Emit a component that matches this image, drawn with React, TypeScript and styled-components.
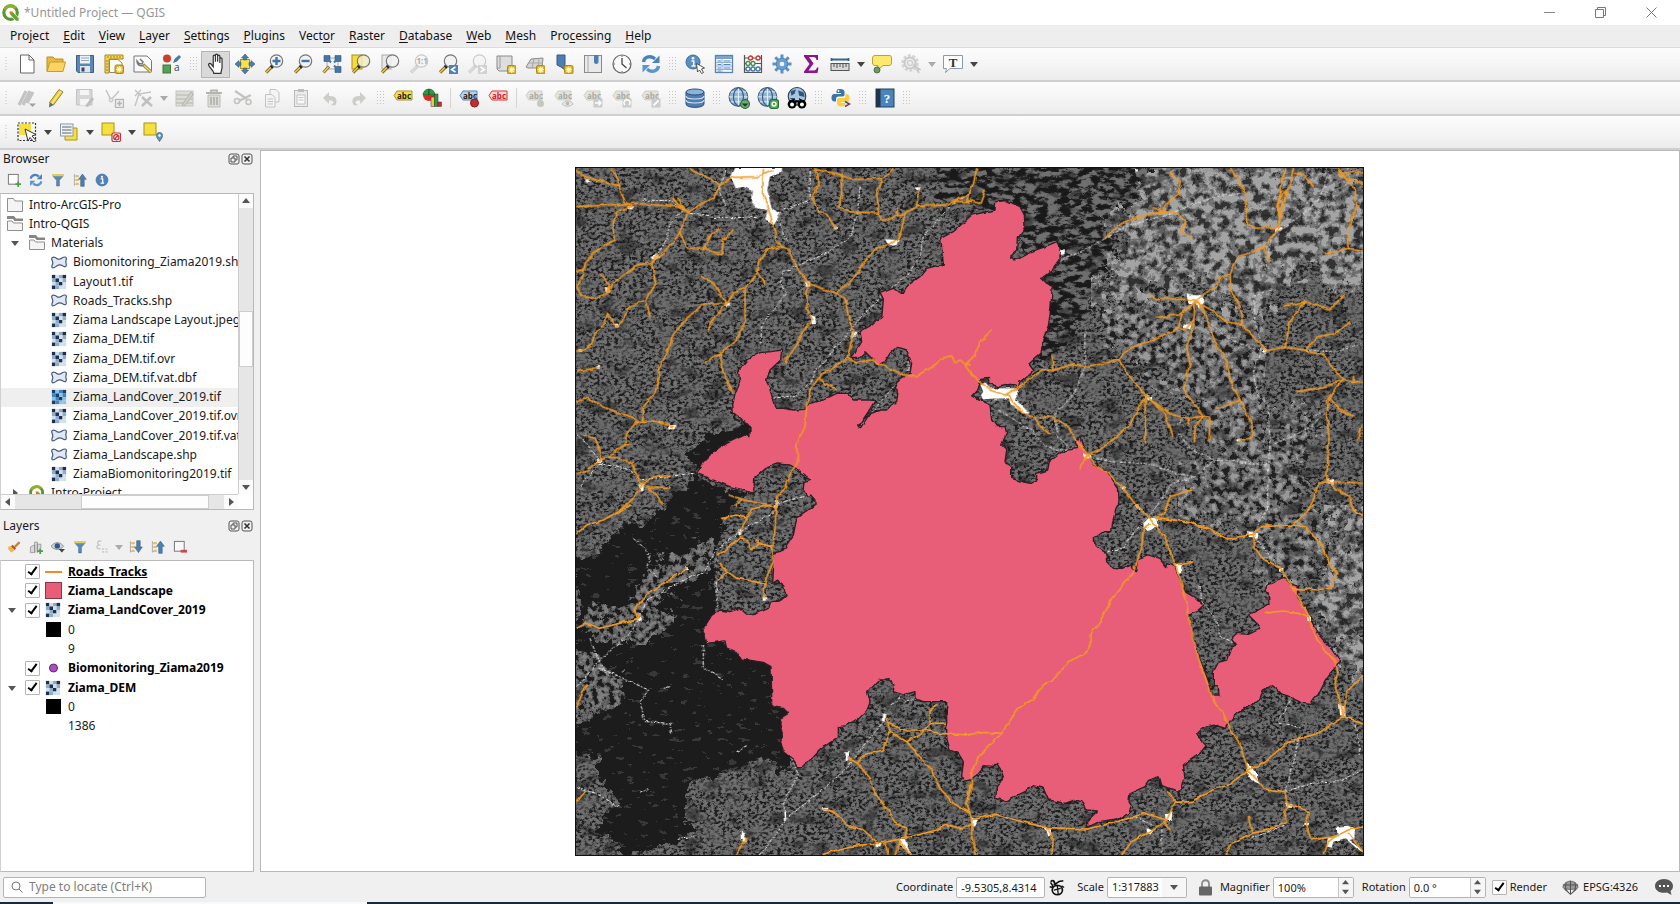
import React from "react";
import styled, { createGlobalStyle, css } from "styled-components";

const GlobalStyle = createGlobalStyle`
  *, *::before, *::after { box-sizing: border-box; }
  html, body, #root { height: 100%; }
  body {
    margin: 0;
    background: #f0f0f0;
    color: #1a1a1a;
    font-family: "Noto Sans", "Open Sans", sans-serif;
    font-size: 12px;
    line-height: 18px;
  }
  button, input, select { font: inherit; color: inherit; margin: 0; }
`;

/* ---------- Window chrome ---------- */

const Window = styled.div`
  display: flex;
  flex-direction: column;
  height: 100vh;
  min-height: 640px;
  overflow: hidden;
`;

const TitleBar = styled.header`
  display: flex;
  align-items: center;
  flex: none;
  height: 25px;
  padding-left: 2px;
  background: #fff;
`;

const Title = styled.h1`
  flex: 1;
  margin: 0 0 0 4px;
  font-size: 12px;
  font-weight: 400;
  color: #979797;
`;

const WindowButton = styled.button`
  display: flex;
  align-items: center;
  justify-content: center;
  width: 51px;
  height: 25px;
  padding: 0;
  border: 0;
  background: none;
`;

const WindowButtons = styled.div`
  display: flex;
  padding-right: 3px;
`;

const MenuBar = styled.nav`
  display: flex;
  align-items: center;
  flex: none;
  height: 23px;
  padding-left: 3px;
  background: #eee;
  border-bottom: 1px solid #dcdcdc;
`;

const MenuItem = styled.button`
  padding: 0 7px;
  border: 0;
  background: none;
  color: #111;
  u { text-underline-offset: 2px; }
`;

/* ---------- Toolbars ---------- */

const ToolRow = styled.div`
  display: flex;
  align-items: center;
  flex: none;
  height: 34px;
  background: linear-gradient(#fdfdfd, #ececec);
  border-bottom: 2px solid #cfcfcf;
`;

const Grip = styled.span<{ $first?: boolean }>`
  flex: none;
  width: ${(p) => (p.$first ? 12 : 15)}px;
  height: 16px;
  padding: 0 4px;
  background: radial-gradient(circle, #c4c4c4 34%, transparent 36%) 50% 0 / 3px 3px content-box;
`;

const Rule = styled.span`
  flex: none;
  width: 8px;
  height: 20px;
  background: linear-gradient(#d4d4d4, #d4d4d4) 50% 0 / 1px 100% no-repeat;
`;

const ToolButton = styled.button<{ $active?: boolean }>`
  display: flex;
  align-items: center;
  justify-content: center;
  flex: none;
  width: 29px;
  height: 27px;
  padding: 0;
  border: 1px solid transparent;
  background: none;
  ${(p) =>
    p.$active &&
    css`
      background: #d9d9d9;
      border-color: #b5b5b5;
    `}
`;

const ArrowButton = styled.button`
  display: flex;
  align-items: center;
  justify-content: center;
  flex: none;
  width: 13px;
  height: 27px;
  padding: 0;
  border: 0;
  background: none;
`;

/* ---------- Docks ---------- */

const Body = styled.main`
  display: flex;
  flex: 1;
  min-height: 0;
`;

const Docks = styled.aside`
  display: flex;
  flex-direction: column;
  flex: none;
  width: 254px;
`;

const Dock = styled.section<{ $grow?: boolean }>`
  display: flex;
  flex-direction: column;
  ${(p) => (p.$grow ? "flex: 1; min-height: 0;" : "flex: none; height: 360px;")}
`;

const DockHead = styled.header`
  display: flex;
  align-items: center;
  flex: none;
  gap: 1px;
  height: 18px;
  padding: 0 1px 0 3px;
`;

const DockTitle = styled.h2`
  flex: 1;
  margin: 0;
  font-size: 12px;
  font-weight: 400;
`;

const DockButton = styled.button`
  display: flex;
  padding: 0;
  border: 0;
  background: none;
`;

const DockTools = styled.div`
  display: flex;
  align-items: center;
  flex: none;
  height: 25px;
  padding: 0 0 2px 3px;
`;

const SmallTool = styled.button<{ $narrow?: boolean }>`
  display: flex;
  align-items: center;
  justify-content: center;
  width: ${(p) => (p.$narrow ? 12 : 22)}px;
  height: 22px;
  padding: 0;
  border: 0;
  background: none;
`;

const Splitter = styled.div`
  flex: none;
  height: 7px;
`;

const ListBox = styled.div`
  display: grid;
  grid-template: 1fr 15px / 1fr 15px;
  flex: 1;
  min-height: 0;
  background: #fff;
  border: 1px solid #b9b9b9;
  border-left-color: #d0d0d0;
`;

const TreeView = styled.div`
  overflow: hidden;
  padding-top: 1px;
`;

const Tree = styled.ul`
  display: grid;
  grid-auto-rows: 1fr;
  height: 308px;
  margin: 0;
  padding: 0;
  list-style: none;
`;

const TreeRow = styled.li<{ $depth: number; $hover?: boolean }>`
  display: flex;
  align-items: center;
  gap: 6px;
  padding-left: ${(p) => (p.$depth === 1 ? 6 : 6 + p.$depth * 22)}px;
  white-space: nowrap;
  background: ${(p) => (p.$hover ? "#efefef" : "none")};
  svg { flex: none; }
`;

const Twisty = styled.span`
  display: flex;
  align-items: center;
  justify-content: center;
  flex: none;
  width: 16px;
`;

const Scroll = styled.div<{ $dir: "row" | "column" }>`
  display: flex;
  flex-direction: ${(p) => p.$dir};
  background: #e6e6e6;
  border: 0 solid #cdcdcd;
  ${(p) => (p.$dir === "row" ? "border-top-width: 1px;" : "border-left-width: 1px;")}
`;

const ScrollButton = styled.button`
  display: flex;
  align-items: center;
  justify-content: center;
  flex: none;
  width: 14px;
  height: 14px;
  padding: 0;
  border: 0;
  background: #fbfbfb;
`;

const Track = styled.div<{ $size: number }>`
  flex: ${(p) => p.$size} 1 0;
`;

const Thumb = styled.div<{ $size: number }>`
  flex: ${(p) => p.$size} 1 0;
  background: #fdfdfd;
  border: 1px solid #cdcdcd;
`;

const LayerBox = styled.div`
  flex: 1;
  min-height: 0;
  padding-top: 1px;
  background: #fff;
  border: 1px solid #b9b9b9;
  border-left-color: #d0d0d0;
`;

const LayerList = styled.ul`
  display: grid;
  grid-auto-rows: 1fr;
  height: 174px;
  margin: 0;
  padding: 0;
  list-style: none;
`;

const LayerRow = styled.li`
  display: grid;
  grid-template-columns: 24px 20px 17px 1fr;
  align-items: center;
  label, > span:last-child { padding-left: 6px; }
`;

const LayerTwisty = styled(Twisty)`
  width: 21px;
`;

const LayerName = styled.label<{ $current?: boolean }>`
  font-weight: 700;
  color: #000;
  text-decoration: ${(p) => (p.$current ? "underline" : "none")};
`;

const Check = styled.input.attrs({ type: "checkbox" })`
  appearance: none;
  display: flex;
  justify-content: center;
  flex: none;
  width: 15px;
  height: 15px;
  border: 1px solid #b4b4b4;
  border-radius: 1px;
  background: #fff;
  &:checked::after {
    content: "";
    width: 5px;
    height: 10px;
    border: solid #000;
    border-width: 0 2px 2px 0;
    transform: rotate(36deg);
  }
`;

const VSplit = styled.div`
  flex: none;
  width: 6px;
`;

const Canvas = styled.section`
  display: flex;
  align-items: center;
  justify-content: center;
  flex: 1;
  min-width: 0;
  padding-right: 2px;
  overflow: hidden;
  background: #fff;
  border: 1px solid #b9b9b9;
`;

const MapSvg = styled.svg`
  flex: none;
`;

/* ---------- Status bar ---------- */

const StatusBar = styled.footer`
  display: flex;
  align-items: center;
  flex: none;
  height: 30px;
  padding: 0 7px 0 3px;
  font-size: 11px;
  white-space: nowrap;
`;

const Locator = styled.label`
  display: flex;
  align-items: center;
  gap: 6px;
  width: 203px;
  height: 21px;
  margin-right: auto;
  padding-left: 7px;
  font-size: 12px;
  background: #fff;
  border: 1px solid #b4b4b4;
  border-radius: 2px;
  input {
    flex: 1;
    min-width: 0;
    padding: 0;
    border: 0;
    outline: 0;
    background: none;
  }
  input::placeholder { color: #7d7d7d; opacity: 1; }
`;

const Field = styled.div<{ $gap: number }>`
  display: flex;
  align-items: center;
  gap: 3px;
  margin-left: ${(p) => p.$gap}px;
`;

const Box = styled.span<{ $width: number }>`
  display: grid;
  grid-template-columns: 1fr auto;
  align-items: center;
  width: ${(p) => p.$width}px;
  height: 21px;
  background: #fff;
  border: 1px solid #b4b4b4;
  border-radius: 2px;
  input, select {
    grid-area: 1 / 1 / 2 / 2;
    width: 100%;
    height: 19px;
    padding: 0 0 0 4px;
    border: 0;
    outline: 0;
    background: none;
    appearance: none;
  }
  select { grid-area: 1 / 1 / 2 / 3; }
`;

const DropMark = styled.span`
  display: flex;
  align-items: center;
  justify-content: center;
  grid-area: 1 / 2 / 2 / 3;
  width: 24px;
  height: 19px;
  background: #f6f6f6;
  pointer-events: none;
`;

const Steps = styled.span`
  display: grid;
  grid-template-rows: 1fr 1fr;
  width: 15px;
  height: 19px;
  border-left: 1px solid #c4c4c4;
  background: #f6f6f6;
  button {
    display: flex;
    align-items: center;
    justify-content: center;
    padding: 0;
    border: 0;
    background: none;
  }
`;

const StatusButton = styled.button`
  display: flex;
  align-items: center;
  gap: 4px;
  padding: 0;
  border: 0;
  background: none;
`;

const Taskbar = styled.div`
  display: flex;
  flex: none;
  height: 2px;
  background: #172a3a;
  span { width: 53px; }
  i { width: 314px; background: #f7f9fb; }
`;

/* ---------- Shared glyphs ---------- */

type Dir = "up" | "down" | "left" | "right";
const triangles: Record<Dir, string> = {
  up: "M0 6L4 1L8 6Z",
  down: "M0 2H8L4 7Z",
  left: "M6 0V8L1 4Z",
  right: "M2 0V8L7 4Z",
};

const Triangle = ({ dir, color = "#555", size = 8 }: { dir: Dir; color?: string; size?: number }) => (
  <svg width={size} height={size} viewBox="0 0 8 8" aria-hidden="true">
    <path d={triangles[dir]} fill={color} />
  </svg>
);

const Pic = ({ size = 20, children }: { size?: number; children: React.ReactNode }) => (
  <svg width={size} height={size} viewBox="0 0 20 20" fill="none" aria-hidden="true">
    {children}
  </svg>
);

const QLogo = ({ size = 18 }: { size?: number }) => (
  <Pic size={size}>
    <circle cx="9.500" cy="9.500" r="7.500" stroke="#589632" strokeWidth="3.500" />
    <path d="M3 6A7.500 7.500 0 0 1 15 4.500" stroke="#93b023" strokeWidth="3.500" />
    <path d="M9 8.500L12 8.500L19 16V19H15.500L9 12Z" fill="#6aa13b" stroke="#fff" strokeWidth=".8" />
    <path d="M8 8L12.500 8.500L9 12Z" fill="#ee7913" />
  </Pic>
);

const Sparkle = ({ x = 11, y = 11 }: { x?: number; y?: number }) => (
  <g transform={`translate(${x} ${y})`}>
    <rect x=".5" y=".5" width="8.500" height="8.500" rx="1.500" fill="#d9b01f" stroke="#b08a10" />
    <path d="M4.750 1.500V8M1.500 4.750H8M2.500 2.500L7 7M7 2.500L2.500 7" stroke="#fff7cf" strokeWidth="1.100" />
  </g>
);

const Lens = ({ dim, fill }: { dim?: boolean; fill?: string }) => (
  <g opacity={dim ? 0.35 : 1}>
    <path d="M8.500 12L2 18.500" stroke={dim ? "#999" : "#8c7322"} strokeWidth="3.200" />
    <path d="M7.500 12.800L2 18.300" stroke={dim ? "#bbb" : "#f0d466"} strokeWidth="1.200" />
    <path d="M9 11.500L7 13.500" stroke={dim ? "#999" : "#222"} strokeWidth="3.200" />
    <circle cx="12.500" cy="7" r="6.200" fill={fill ?? "#f1f1ee"} fillOpacity=".85" stroke="#777" strokeWidth="1.200" />
  </g>
);

const Tag = ({ fill, stroke, text = "#222", w = 19 }: { fill: string; stroke: string; text?: string; w?: number }) => (
  <g>
    <path d={`M1 7.500L4 3H${w}V12H4Z`} fill={fill} stroke={stroke} strokeLinejoin="round" />
    <text x="4" y="10.500" fontSize="8" fontWeight="700" fontFamily="Open Sans, sans-serif" fill={text}>
      abc
    </text>
  </g>
);

const Globe = () => (
  <>
    <circle cx="9.500" cy="9" r="8.500" fill="#8fb4d6" stroke="#44607c" />
    <path d="M9.500 .5V17.500M1 9H18M2.500 4.500H16.500M2.500 13.500H16.500" stroke="#e9f1f8" strokeWidth=".9" />
    <path d="M9.500 .5C3.500 4 3.500 14 9.500 17.500C15.500 14 15.500 4 9.500 .5Z" stroke="#3b5d80" strokeWidth="1.100" />
  </>
);

const rasterCells = "0210102121020122";

const Raster = ({ blue }: { blue?: boolean }) => {
  const shade = blue ? ["#163f6b", "#3d86c2", "#8fc0e6"] : ["#1d2f4c", "#8fabc8", "#cfdfed"];
  return (
    <svg width="16" height="16" viewBox="-1 -1 18 18" aria-hidden="true">
      {rasterCells.split("").map((c, i) => (
        <rect key={i} x={(i % 4) * 4} y={Math.floor(i / 4) * 4} width="4" height="4" fill={shade[Number(c)]} />
      ))}
    </svg>
  );
};

const Polygon = () => (
  <svg width="16" height="13" viewBox="0 0 16 13" fill="none" aria-hidden="true">
    <path d="M1 4C0 1.500 2 .8 4 1.500C6 2.200 6.500 3.800 9 3C11 2.300 12 .8 14 1C15.800 1.300 15.500 3 15 4.500C14.500 6 15.200 7.500 15.300 9C15.300 11 13.500 11 12 10C10 8.800 8 8.500 6 9.800C4.500 10.800 3 12.200 1.500 11.800C.2 11.200 1 9.500 1.600 8C2.200 6.500 1.600 5.500 1 4Z" fill="#dfe8f4" stroke="#42587a" strokeWidth="1.200" />
  </svg>
);

const Folder = ({ open }: { open?: boolean }) => (
  <svg width="16" height="16" viewBox="0 0 16 16" fill="none" aria-hidden="true">
    {open ? (
      <>
        <path d="M0 0H7L9 2.500H16V5H7.500L6 3H0Z" fill="#858585" />
        <path d="M.5 14.500V5H5L6.500 7H15.500V14.500Z" fill="#f4f4f4" stroke="#8f8f8f" />
      </>
    ) : (
      <path d="M.5 14.500V1.500H6.500L8 4H15.500V14.500Z" fill="#f4f4f4" stroke="#8f8f8f" />
    )}
  </svg>
);

const RefreshShape = () => (
  <>
    <path d="M2.500 8C3 3.500 8 1.500 12 3.500L14 5" stroke="#4a82bd" strokeWidth="3.400" />
    <path d="M18.500 1.500V9H11Z" fill="#4a82bd" />
    <path d="M17.500 12C17 16.500 12 18.500 8 16.500L6 15" stroke="#5b93cc" strokeWidth="3.400" />
    <path d="M1.500 18.500V11H9Z" fill="#5b93cc" />
  </>
);

const Funnel = () => (
  <>
    <path d="M2 3.500H18L12 10.500V18.500H8V10.500Z" fill="#5c8ab8" stroke="#3e6690" strokeWidth=".8" />
    <rect x="1.500" y="1.500" width="17" height="3" rx="1" fill="#d9cf62" />
  </>
);

const Info = () => (
  <>
    <circle cx="10" cy="10" r="8.500" fill="#4f83ba" stroke="#3c6899" />
    <circle cx="10" cy="5.500" r="1.500" fill="#fff" />
    <path d="M8 8.500H11V14.500M8 14.500H13" stroke="#fff" strokeWidth="1.800" />
  </>
);

const TreeArrow = ({ down }: { down?: boolean }) => (
  <>
    <path d="M2 1.500V18M2 4.500H8M2 10H8M2 16H8" stroke="#9a9a9a" />
    <path d="M4 3H8V6H4ZM4 8.500H8V11.500H4ZM4 14H8V17H4Z" fill="#e9bf5a" />
    <path d={down ? "M11 1H16V10H19L13.500 18L8 10H11Z" : "M11 19H16V9H19L13.500 1.500L8 9H11Z"} fill="#4d7fb3" stroke="#33597f" strokeWidth=".8" />
  </>
);

const grey = "#c3c3c0";

const DimTag = ({ children }: { children?: React.ReactNode }) => (
  <Pic>
    <Tag fill="#e4e4dd" stroke="#cfcfc8" text="#a9a9a4" w={17} />
    {children}
  </Pic>
);

const icons: Record<string, React.ReactNode> = {
  "New Project": (
    <Pic>
      <path d="M3.500 1H12L17 6V19H3.500Z" fill="#fff" stroke="#666" />
      <path d="M12 1V6H17" stroke="#666" />
    </Pic>
  ),
  "Open Project": (
    <Pic>
      <path d="M1 17V3H7L9 5H17V8" fill="#e8b93c" stroke="#b98d24" />
      <path d="M1 17.500L4 8H19.500L17 17.500Z" fill="#fbd460" stroke="#c99a2c" />
    </Pic>
  ),
  "Save Project": (
    <Pic>
      <path d="M1.500 1.500H18.500V18.500H3L1.500 17Z" fill="#5a86b6" stroke="#3c5f88" />
      <rect x="5" y="1.500" width="10" height="8" fill="#eef2f6" />
      <path d="M6 4H14M6 6.500H14" stroke="#9aa7b5" />
      <rect x="5" y="12" width="10" height="6.500" fill="#dfe5ec" />
      <rect x="6.500" y="13.500" width="3" height="4" fill="#33465c" />
    </Pic>
  ),
  "New Print Layout": (
    <Pic>
      <path d="M1 1H19V5H5V19H1Z" fill="#f5d552" stroke="#a68a1e" />
      <path d="M5.500 5.500H14L18 9V18.500H5.500Z" fill="#fafafa" stroke="#888" />
      <path d="M4 2V4M7 2V4M10 2V4M13 2V4M16 2V4M2 7H4M2 10H4M2 13H4M2 16H4" stroke="#8a7118" strokeWidth=".8" />
      <Sparkle x={10.5} y={10.5} />
    </Pic>
  ),
  "Layout Manager": (
    <Pic>
      <path d="M1 2H14L18.500 6.500V18H1Z" fill="#fafafa" stroke="#777" />
      <path d="M7 5L10 8L9 10L6 9.500L4 7C4 11 7 12.500 10 11.500" stroke="#777" strokeWidth="1.500" />
      <path d="M10 10.500L18 18" stroke="#a38a3a" strokeWidth="3.200" />
      <path d="M11 11.500L18 18" stroke="#f2d973" strokeWidth="1.200" />
    </Pic>
  ),
  "Style Manager": (
    <Pic>
      <circle cx="5" cy="4.500" r="4" fill="#c9412b" />
      <rect x="1" y="11" width="7.500" height="8" fill="#58a058" stroke="#3b7a3b" />
      <path d="M11 9L12.500 5L17 1L19 3L15 7.500Z" fill="#4879ab" />
      <text x="12" y="17" fontSize="10" fontFamily="Open Sans, sans-serif" fill="#444">
        a
      </text>
    </Pic>
  ),
  "Pan Map": (
    <Pic size={22}>
      <path
        d="M7.500 11V3C7.500 1.500 9.500 1.500 9.500 3V8V2C9.500 .7 11.500 .7 11.500 2V8V3C11.500 1.700 13.500 1.700 13.500 3V9V5.500C13.500 4.200 15.500 4.200 15.500 5.500V13C15.500 15 14.500 16 14.500 18.500H8C8 16.500 5 14 3.500 11.500C2.500 9.800 4.500 8.800 5.500 10L7.500 12.500Z"
        fill="#fff"
        stroke="#333"
        strokeWidth="1.100"
      />
    </Pic>
  ),
  "Pan to Selection": (
    <Pic>
      <rect x="5.500" y="5.500" width="9" height="9" fill="#f7e14c" stroke="#a89220" />
      <path d="M10 0L13.500 4H11.500V6H8.500V4H6.500ZM10 20L6.500 16H8.500V14H11.500V16H13.500ZM0 10L4 6.500V8.500H6V11.500H4V13.500ZM20 10L16 13.500V11.500H14V8.500H16V6.500Z" fill="#4b7cb3" stroke="#33587f" strokeWidth=".6" />
    </Pic>
  ),
  "Zoom In": (
    <Pic>
      <Lens />
      <path d="M12.500 3V11M8.500 7H16.500" stroke="#3d73b0" strokeWidth="2.400" />
    </Pic>
  ),
  "Zoom Out": (
    <Pic>
      <Lens />
      <path d="M8.500 7H16.500" stroke="#3d73b0" strokeWidth="2.400" />
    </Pic>
  ),
  "Zoom Full": (
    <Pic>
      <rect x="5" y="4" width="11" height="11" fill="#f3f3f3" stroke="#aaa" />
      <path d="M7 12.500L1.500 18.500" stroke="#8c7322" strokeWidth="3.200" />
      <path d="M6.500 13L1.500 18.300" stroke="#f0d466" strokeWidth="1.200" />
      <path d="M2 1.500H8V7.500H2ZM13 1.500H19V7.500H13ZM13 12.500H19V18.500H13Z" fill="#4676a8" stroke="#2f5680" strokeWidth=".6" />
      <path d="M4 3.500L9 8.500M17 3.500L12 8.500M17 16.500L12 11.500" stroke="#4676a8" strokeWidth="2" />
    </Pic>
  ),
  "Zoom to Selection": (
    <Pic>
      <rect x="1" y="1" width="10" height="14" fill="#f7dd3c" stroke="#a68f1e" />
      <Lens fill="#f3ecc0" />
    </Pic>
  ),
  "Zoom to Layer": (
    <Pic>
      <rect x="2" y="1" width="9" height="14" fill="#e8e8e8" stroke="#aaa" />
      <Lens />
    </Pic>
  ),
  "Zoom to Native Resolution": (
    <Pic>
      <Lens dim />
      <text x="7.500" y="10" fontSize="8" fontWeight="700" fontFamily="Open Sans, sans-serif" fill="#aaa">
        1:1
      </text>
    </Pic>
  ),
  "Zoom Last": (
    <Pic>
      <Lens />
      <rect x="11" y="11" width="9" height="9" fill="#4c83ba" />
      <path d="M17.500 13L13.500 15.500L17.500 18" stroke="#fff" strokeWidth="1.500" />
    </Pic>
  ),
  "Zoom Next": (
    <Pic>
      <Lens dim />
      <rect x="11" y="11" width="9" height="9" fill="#d2d2d2" />
      <path d="M13.500 13L17.500 15.500L13.500 18" stroke="#fff" strokeWidth="1.500" />
    </Pic>
  ),
  "New Map View": (
    <Pic>
      <path d="M1 2H16V17H3L1 15Z" fill="#dedede" stroke="#8b8b8b" />
      <path d="M4 2V14H1" stroke="#999" />
      <Sparkle />
    </Pic>
  ),
  "New 3D Map View": (
    <Pic>
      <path d="M1 13L6 5L18 4L17 14H3Z" fill="#d4d4d4" stroke="#8b8b8b" />
      <path d="M4 9L17.500 9M9 5L7 14M14 4.500L13 14" stroke="#aaa" />
      <Sparkle />
    </Pic>
  ),
  "New Spatial Bookmark": (
    <Pic>
      <path d="M3 1H11V16L7 13L3 11Z" fill="#4f7db1" stroke="#355a85" />
      <Sparkle x={10} />
    </Pic>
  ),
  "Show Spatial Bookmarks": (
    <Pic>
      <rect x="1.500" y="1.500" width="17" height="17" fill="#e9e9e9" stroke="#8a8a8a" />
      <path d="M5 1.500V18.500" stroke="#aaa" />
      <path d="M11 1H15.500V8C15.500 10.500 11 10.500 11 8Z" fill="#4f7db1" />
    </Pic>
  ),
  "Temporal Controller": (
    <Pic>
      <circle cx="10" cy="10" r="9" fill="#fafafa" stroke="#666" strokeWidth="1.200" />
      <path d="M10 4V10L14.500 14" stroke="#444" strokeWidth="1.300" />
      <path d="M10 1.500V3M10 17V18.500M1.500 10H3M17 10H18.500" stroke="#666" />
    </Pic>
  ),
  Refresh: (
    <Pic>
      <RefreshShape />
    </Pic>
  ),
  "Identify Features": (
    <Pic>
      <circle cx="8" cy="8" r="7" fill="#5b8fc4" stroke="#3d6d9e" />
      <circle cx="8" cy="4.300" r="1.300" fill="#fff" />
      <path d="M6.500 7H8.700V12M6.500 12H10.500" stroke="#fff" strokeWidth="1.500" />
      <path d="M11.500 9.500L19.500 14L16.500 15L18.500 18.500L16.500 19.500L14.500 16L12.500 18Z" fill="#fff" stroke="#444" strokeWidth=".9" />
    </Pic>
  ),
  "Open Attribute Table": (
    <Pic>
      <rect x="1.500" y="1.500" width="17" height="17" fill="#f7fafd" stroke="#5784b3" strokeWidth="1.300" />
      <rect x="2" y="2" width="16" height="3" fill="#7ba4cf" />
      <path d="M2 8.500H18M2 12H18M2 15.500H18M8 5V18" stroke="#8fb2d6" />
      <path d="M3.500 7H7M3.500 10.500H7M3.500 14H7M3.500 17H7M9.500 7H16.500M9.500 10.500H16.500M9.500 14H16.500" stroke="#5784b3" />
    </Pic>
  ),
  "Field Calculator": (
    <Pic>
      <path d="M1.500 1V18.500H18.500V1M1.500 4H18.500M1.500 9.500H18.500M1.500 15H18.500" stroke="#555" strokeWidth="1.200" />
      <g strokeWidth="1.300" fill="#fff">
        <circle cx="7.500" cy="4" r="2" stroke="#c8332b" />
        <circle cx="15" cy="4" r="2" stroke="#c8332b" />
        <circle cx="5" cy="9.500" r="2" stroke="#3d9145" />
        <circle cx="10" cy="9.500" r="2" stroke="#3d9145" />
        <circle cx="5" cy="15" r="2" stroke="#4177b0" />
        <circle cx="10" cy="15" r="2" stroke="#4177b0" />
        <circle cx="15" cy="15" r="2" stroke="#4177b0" />
      </g>
    </Pic>
  ),
  Toolbox: (
    <Pic>
      <path d="M10 .5V19.500M.5 10H19.500M3.300 3.300L16.700 16.700M16.700 3.300L3.300 16.700" stroke="#5c90c6" strokeWidth="3" />
      <circle cx="10" cy="10" r="5.800" fill="#6a9fd4" stroke="#5487bd" />
      <circle cx="10" cy="10" r="2.300" fill="#f6f6f6" />
    </Pic>
  ),
  "Statistical Summary": (
    <Pic>
      <path d="M3 1H17V6H15.500C15 4 14.500 3 12 3H8L12.500 9.500L7.500 16.500H12.500C15 16.500 15.500 15 16 13.500H17.500L16.500 19H3V17.500L8.500 10L3 2.500Z" fill="#8d148d" />
    </Pic>
  ),
  "Measure Line": (
    <Pic>
      <path d="M1 5.500H19M1.500 4V7M18.500 4V7" stroke="#36648f" strokeWidth="1.800" />
      <rect x="1" y="9.500" width="18" height="7" fill="#d8d8d8" stroke="#555" />
      <path d="M4 10V13M7 10V14M10 10V13M13 10V14M16 10V13" stroke="#555" />
    </Pic>
  ),
  "Map Tips": (
    <Pic>
      <path d="M3 1.500H17C19 1.500 19.500 2.500 19.500 4V9C19.500 10.500 18.500 11.500 17 11.500H11L6 16V11.500H3C1.500 11.500 .5 10.500 .5 9V4C.5 2.500 1.500 1.500 3 1.500Z" fill="#fae96c" stroke="#b7a434" />
      <circle cx="5" cy="16" r="3" fill="#6c9a63" stroke="#4a7143" />
    </Pic>
  ),
  "Run Feature Action": (
    <Pic>
      <circle cx="9" cy="9" r="7.500" stroke="#d3d3d3" strokeWidth="2.500" strokeDasharray="3 1.700" />
      <circle cx="9" cy="9" r="5.500" fill="#eee" stroke="#cacaca" strokeWidth="2" />
      <circle cx="9" cy="9" r="2.500" stroke="#cacaca" strokeWidth="1.200" />
      <path d="M12 11L19 15.500L16 16L18 19" stroke="#c6c6c6" strokeWidth="1.500" />
    </Pic>
  ),
  "Text Annotation": (
    <Pic>
      <path d="M.5 1.500H19.500V14.500H7L2.500 18.500L3.500 14.500H.5Z" fill="#fdfdfd" stroke="#8d9aa6" />
      <text x="10" y="12.500" fontSize="13" fontWeight="700" textAnchor="middle" fontFamily="Liberation Serif, serif" fill="#333">
        T
      </text>
    </Pic>
  ),
  "Current Edits": (
    <Pic>
      <path d="M2 17L9 3M6 17L13 3M10 15L16 4" stroke="#c4c4c4" strokeWidth="3.200" />
      <path d="M12 15.500H19L15.500 19Z" fill="#a0a0a0" />
    </Pic>
  ),
  "Toggle Editing": (
    <Pic>
      <path d="M3.500 14.500L13 1.500L17 4L7.500 17Z" fill="#efcf3d" stroke="#9c8424" />
      <path d="M6 15.500L15 3" stroke="#fbeb9c" strokeWidth="1.200" />
      <path d="M3.500 14.500L7.500 17L3 19.500Z" fill="#5a6b80" />
    </Pic>
  ),
  "Save Layer Edits": (
    <Pic>
      <path d="M1.500 1.500H17V17H1.500Z" fill="#d7d7d7" stroke={grey} />
      <path d="M5 2H14V7H5ZM5 11H14V17H5Z" fill="#f5f5f5" />
      <path d="M10 18L17 9L19 11L13 19Z" fill="#bdbdbd" />
    </Pic>
  ),
  Digitize: (
    <Pic>
      <path d="M2 2L7 12L15 3" stroke={grey} strokeWidth="1.400" />
      <circle cx="7" cy="12" r="2" fill="#e5e5e5" stroke={grey} />
      <rect x="11.500" y="11.500" width="8" height="8" fill="#eee" stroke="#b5b5b5" strokeWidth="1.300" />
      <path d="M15.500 13V18M13 15.500H18" stroke="#b5b5b5" strokeWidth="1.500" />
    </Pic>
  ),
  "Vertex Tool": (
    <Pic>
      <path d="M2 18L6 6L18 4M2 2L8 8M8 2L2 8" stroke={grey} strokeWidth="1.400" />
      <path d="M9 9L19 18M18 9L9 18" stroke="#c0c0c0" strokeWidth="2.600" />
    </Pic>
  ),
  "Modify Attributes": (
    <Pic>
      <rect x="1" y="3" width="17" height="15" fill="#deded8" stroke={grey} />
      <path d="M1 7H18M1 11H18M1 15H18" stroke="#c2c2bc" strokeWidth="1.500" />
      <path d="M7 17L16 4L18.500 6L9.500 18Z" fill="#d0d0ca" stroke="#b5b5b0" />
    </Pic>
  ),
  "Delete Selected": (
    <Pic>
      <path d="M4 7H16V19H4Z" fill="#dcdcd8" stroke="#bcbcb8" />
      <path d="M7 9V17M10 9V17M13 9V17M2 5H18M7 5V2.500H13V5" stroke="#b4b4b0" strokeWidth="1.800" />
    </Pic>
  ),
  "Cut Features": (
    <Pic>
      <path d="M2 3L14 11M6 13L18 7" stroke={grey} strokeWidth="2.200" />
      <circle cx="4" cy="13" r="2.500" stroke={grey} strokeWidth="1.600" />
      <circle cx="15.500" cy="14" r="2.500" stroke={grey} strokeWidth="1.600" />
    </Pic>
  ),
  "Copy Features": (
    <Pic>
      <path d="M8 1.500H14L17 4.500V14H8Z" fill="#f4f4f4" stroke={grey} />
      <path d="M3.500 6.500H10L13 9.500V19H3.500Z" fill="#f4f4f4" stroke={grey} />
      <path d="M5.500 11H11M5.500 13.500H11M5.500 16H11" stroke={grey} />
    </Pic>
  ),
  "Paste Features": (
    <Pic>
      <rect x="3.500" y="2.500" width="13" height="16" fill="#ebebeb" stroke="#b9b9b9" />
      <rect x="7" y="1" width="6" height="3" fill="#bdbdbd" />
      <path d="M6 7H14V16H6Z" fill="#fafafa" stroke={grey} />
      <path d="M7.500 9.500H12.500M7.500 12H12.500" stroke={grey} />
    </Pic>
  ),
  Undo: (
    <Pic>
      <path d="M3 10L9 4V8C15 7.500 18 11 16 16C15 18 13 17.500 11 17C15 15 14 12 9 12.500V16Z" fill="#cdcdc9" />
    </Pic>
  ),
  Redo: (
    <Pic>
      <path d="M17 10L11 4V8C5 7.500 2 11 4 16C5 18 7 17.500 9 17C5 15 6 12 11 12.500V16Z" fill="#cdcdc9" />
    </Pic>
  ),
  "Layer Labeling": (
    <Pic>
      <Tag fill="#f6de45" stroke="#ab9420" />
    </Pic>
  ),
  "Layer Diagram": (
    <Pic>
      <path d="M7 7L1 7A6 6 0 0 1 7 1Z" fill="#2a9c3c" stroke="#222" strokeWidth=".5" />
      <path d="M7 7V1A6 6 0 0 1 13 7Z" fill="#2a9c3c" stroke="#222" strokeWidth=".5" />
      <path d="M7 7H13A6 6 0 0 1 7 13A6 6 0 0 1 1 7Z" fill="#e0252b" />
      <rect x="9" y="9" width="3.500" height="9.500" fill="#e5cf35" stroke="#333" strokeWidth=".5" />
      <rect x="12.500" y="6" width="3.500" height="12.500" fill="#2a9c3c" stroke="#333" strokeWidth=".5" />
      <rect x="16" y="14" width="3.500" height="4.500" fill="#d8262c" stroke="#333" strokeWidth=".5" />
    </Pic>
  ),
  "Highlight Pinned Labels": (
    <Pic>
      <Tag fill="#b6d3ea" stroke="#5784ad" w={18} />
      <path d="M16 8V14" stroke="#5784ad" strokeWidth="1.500" />
      <circle cx="15.500" cy="15" r="4" fill="#c22f2f" stroke="#8c1c1c" />
    </Pic>
  ),
  "Toggle Unplaced Labels": (
    <Pic>
      <Tag fill="#fbd6d6" stroke="#e03030" text="#cf2020" />
    </Pic>
  ),
  "Pin Labels": (
    <DimTag>
      <circle cx="15.500" cy="15.500" r="3.500" fill="#c6c6c2" />
      <path d="M15 7V12" stroke="#c6c6c2" strokeWidth="2" />
    </DimTag>
  ),
  "Show Labels": (
    <DimTag>
      <path d="M8 16C11 12 17 12 19 16C16 19 11 19 8 16Z" fill="#e9e9e9" stroke="#bdbdbd" />
      <circle cx="13.500" cy="15.500" r="1.800" fill="#b5b5b5" />
    </DimTag>
  ),
  "Move Label": (
    <DimTag>
      <rect x="10.500" y="10.500" width="9" height="9" fill="#ccc" />
      <path d="M12 15H18M15.500 12.500L18 15L15.500 17.500" stroke="#fff" strokeWidth="1.500" />
    </DimTag>
  ),
  "Rotate Label": (
    <DimTag>
      <rect x="10.500" y="10.500" width="9" height="9" fill="#ccc" />
      <path d="M13 17A3 3 0 1 1 17 17" stroke="#fff" strokeWidth="1.500" />
    </DimTag>
  ),
  "Change Label": (
    <DimTag>
      <rect x="10.500" y="10.500" width="9" height="9" fill="#ccc" />
      <path d="M12.500 17.500L17.500 12.500" stroke="#fff" strokeWidth="2" />
    </DimTag>
  ),
  "DB Manager": (
    <Pic>
      <path d="M1 4V16C1 20.500 19 20.500 19 16V4Z" fill="#4d7fb3" stroke="#2e4f78" />
      <ellipse cx="10" cy="4" rx="9" ry="3" fill="#8db3d9" stroke="#2e4f78" />
      <path d="M1 8C1 12 19 12 19 8M1 12C1 16 19 16 19 12" stroke="#d7e5f2" strokeWidth="1.100" />
    </Pic>
  ),
  "Web Services": (
    <Pic size={22}>
      <Globe />
      <circle cx="15.500" cy="15.500" r="4" fill="#6faa72" stroke="#2e6a35" />
      <path d="M12.500 15H18.500L15.500 18Z" fill="#1f3f22" />
    </Pic>
  ),
  "Quick Map Services": (
    <Pic size={22}>
      <Globe />
      <rect x="11.500" y="11.500" width="8" height="8" rx="2" fill="#4fae57" stroke="#2e6a35" />
      <circle cx="15.500" cy="15.500" r="1.800" stroke="#fff" strokeWidth="1.200" />
    </Pic>
  ),
  MetaSearch: (
    <Pic size={22}>
      <circle cx="10" cy="8.500" r="8" fill="#a9c6df" stroke="#2b3d50" />
      <path d="M4 4L9 2L8 6L5 8ZM11 3L16 5L17 9L12 8ZM3 10L7 10L8 13Z" fill="#31557a" />
      <circle cx="5.500" cy="15.500" r="4" fill="#000" />
      <circle cx="14.500" cy="15.500" r="4" fill="#000" />
      <path d="M5 12L8 10V14H12V10L15 12" fill="#000" />
      <circle cx="5.500" cy="16" r="1.800" fill="#fff" />
      <circle cx="14.500" cy="16" r="1.800" fill="#fff" />
    </Pic>
  ),
  "Python Console": (
    <Pic>
      <path d="M9 1C5.500 1 5.500 2.500 5.500 5H10V6H3.500C1 6 .5 8 .5 10C.5 12 1.500 13.500 3.500 13.500H5V11C5 9.500 6 8.500 7.500 8.500H11.500C13 8.500 13.500 7.500 13.500 6.500V4C13.500 2 12 1 9 1Z" fill="#3a74a8" />
      <circle cx="7.500" cy="3" r=".9" fill="#fff" />
      <path d="M10.500 18.500C14 18.500 14.500 17 14.500 15H10V14H16C18 14 18.500 12.500 18.500 10C18.500 7.500 17.500 6 15.500 6H14.500V8C14.500 9.500 13.500 10 12 10H8C6.500 10 6 11 6 12V15.500C6 17.500 7.500 18.500 10.500 18.500Z" fill="#f7cf3f" />
      <path d="M14 13.500L18.500 16L14 18.500" stroke="#6b3d7a" strokeWidth="1.500" fill="none" />
    </Pic>
  ),
  "Help Contents": (
    <Pic>
      <rect x="1" y="1" width="18" height="18" fill="#4b83bd" stroke="#23405f" />
      <rect x="1" y="1" width="4.500" height="18" fill="#1f3349" />
      <text x="12" y="14.500" fontSize="13" fontWeight="700" textAnchor="middle" fontFamily="Liberation Serif, serif" fill="#fff">
        ?
      </text>
    </Pic>
  ),
  "Select Features": (
    <Pic>
      <rect x="1" y="1" width="17.500" height="17.500" stroke="#333" strokeWidth="1.200" strokeDasharray="2 1.500" />
      <rect x="2" y="2" width="12" height="11" fill="#f6e03e" />
      <path d="M8 7L19 12.500L15 14L19 18.500L17 20L13 15.500L11 19Z" fill="#fff" stroke="#333" />
    </Pic>
  ),
  "Select by Value": (
    <Pic>
      <path d="M6 6H18V18H6Z" fill="#f6e03e" stroke="#aa931c" />
      <rect x="1.500" y="2" width="12.500" height="12" fill="#f1f3f5" stroke="#8b97a3" />
      <path d="M3 5H12.500M3 8H12.500M3 11H12.500" stroke="#8b97a3" strokeWidth="1.400" />
    </Pic>
  ),
  "Deselect Features": (
    <Pic>
      <rect x="1" y="1" width="12" height="12" fill="#f6e03e" stroke="#aa931c" />
      <rect x="11" y="11" width="8.500" height="8.500" rx="1.500" fill="#fff" stroke="#cc2f35" strokeWidth="1.200" />
      <circle cx="15.300" cy="15.300" r="2.600" stroke="#cc2f35" strokeWidth="1.200" />
      <path d="M13.500 17L17 13.500" stroke="#cc2f35" strokeWidth="1.200" />
    </Pic>
  ),
  "Select by Location": (
    <Pic>
      <rect x="1" y="1" width="12" height="12" fill="#f6e03e" stroke="#aa931c" />
      <path d="M16.500 19.500C14.500 16.500 13.500 15.500 13.500 13.500A3 3 0 0 1 19.500 13.500C19.500 15.500 18.500 16.500 16.500 19.500Z" fill="#6793b0" stroke="#3b6684" strokeWidth=".8" />
      <circle cx="16.500" cy="13.500" r="1.200" fill="#fff" />
    </Pic>
  ),
};

/* "|" is a group grip, "/" a thin rule, "v" a drop-down arrow; a leading "-" disables the entry */
const toolRows: string[][] = [
  ["New Project", "Open Project", "Save Project", "New Print Layout", "Layout Manager", "Style Manager", "|", "Pan Map", "Pan to Selection", "Zoom In", "Zoom Out", "Zoom Full", "Zoom to Selection", "Zoom to Layer", "-Zoom to Native Resolution", "Zoom Last", "-Zoom Next", "New Map View", "New 3D Map View", "New Spatial Bookmark", "Show Spatial Bookmarks", "Temporal Controller", "Refresh", "|", "Identify Features", "Open Attribute Table", "Field Calculator", "Toolbox", "Statistical Summary", "Measure Line", "v", "Map Tips", "-Run Feature Action", "-v", "Text Annotation", "v"],
  ["-Current Edits", "Toggle Editing", "-Save Layer Edits", "-Digitize", "-Vertex Tool", "-v", "-Modify Attributes", "-Delete Selected", "-Cut Features", "-Copy Features", "-Paste Features", "-Undo", "-Redo", "|", "Layer Labeling", "Layer Diagram", "/", "Highlight Pinned Labels", "Toggle Unplaced Labels", "/", "-Pin Labels", "-Show Labels", "-Move Label", "-Rotate Label", "-Change Label", "|", "DB Manager", "|", "Web Services", "Quick Map Services", "MetaSearch", "|", "Python Console", "|", "Help Contents", "|"],
  ["Select Features", "v", "Select by Value", "v", "Deselect Features", "v", "Select by Location"],
];

const Toolbar = ({ items }: { items: string[] }) => (
  <ToolRow role="toolbar">
    <Grip $first />
    {items.map((item, i) => {
      if (item === "|") return <Grip key={i} />;
      if (item === "/") return <Rule key={i} />;
      const disabled = item.startsWith("-");
      const name = disabled ? item.slice(1) : item;
      if (name === "v")
        return (
          <ArrowButton key={i} disabled={disabled} aria-label="More">
            <Triangle dir="down" color={disabled ? "#aaa" : "#444"} />
          </ArrowButton>
        );
      return (
        <ToolButton key={i} disabled={disabled} aria-label={name} $active={name === "Pan Map"}>
          {icons[name]}
        </ToolButton>
      );
    })}
  </ToolRow>
);

/* ---------- Browser and Layers ---------- */

type Kind = "folder" | "open" | "vector" | "raster" | "rasterHot" | "project";
const files: { name: string; depth: number; kind: Kind; twisty?: Dir }[] = [
  { name: "Intro-ArcGIS-Pro", depth: 0, kind: "folder" },
  { name: "Intro-QGIS", depth: 0, kind: "open" },
  { name: "Materials", depth: 1, kind: "open", twisty: "down" },
  { name: "Biomonitoring_Ziama2019.shp", depth: 2, kind: "vector" },
  { name: "Layout1.tif", depth: 2, kind: "raster" },
  { name: "Roads_Tracks.shp", depth: 2, kind: "vector" },
  { name: "Ziama Landscape Layout.jpeg", depth: 2, kind: "raster" },
  { name: "Ziama_DEM.tif", depth: 2, kind: "raster" },
  { name: "Ziama_DEM.tif.ovr", depth: 2, kind: "raster" },
  { name: "Ziama_DEM.tif.vat.dbf", depth: 2, kind: "vector" },
  { name: "Ziama_LandCover_2019.tif", depth: 2, kind: "rasterHot" },
  { name: "Ziama_LandCover_2019.tif.ovr", depth: 2, kind: "raster" },
  { name: "Ziama_LandCover_2019.tif.vat.dbf", depth: 2, kind: "vector" },
  { name: "Ziama_Landscape.shp", depth: 2, kind: "vector" },
  { name: "ZiamaBiomonitoring2019.tif", depth: 2, kind: "raster" },
  { name: "Intro-Project", depth: 1, kind: "project", twisty: "right" },
];

const fileIcon: Record<Kind, React.ReactNode> = {
  folder: <Folder />,
  open: <Folder open />,
  vector: <Polygon />,
  raster: <Raster />,
  rasterHot: <Raster blue />,
  project: <QLogo size={16} />,
};

const DockHeader = ({ title }: { title: string }) => (
  <DockHead>
    <DockTitle>{title}</DockTitle>
    <DockButton aria-label={`Float ${title}`}>
      <svg width="12" height="12" viewBox="0 0 12 12" fill="none">
        <rect x="1" y="1" width="10" height="10" rx="2" stroke="#555" />
        <path d="M5 5V3H9V7H7M3 5H7V9H3Z" stroke="#555" />
      </svg>
    </DockButton>
    <DockButton aria-label={`Close ${title}`}>
      <svg width="12" height="12" viewBox="0 0 12 12" fill="none">
        <rect x="1" y="1" width="10" height="10" rx="2" stroke="#555" />
        <path d="M3.500 3.500L8.500 8.500M8.500 3.500L3.500 8.500" stroke="#333" strokeWidth="1.600" />
      </svg>
    </DockButton>
  </DockHead>
);

const BrowserDock = () => (
  <Dock>
    <DockHeader title="Browser" />
    <DockTools>
      <SmallTool aria-label="Add Selected Layers">
        <Pic size={14}>
          <rect x="2" y="2" width="14" height="14" fill="#fdfdfd" stroke="#777" strokeWidth="1.400" />
          <path d="M16 12V20M12 16H20" stroke="#4d9a4d" strokeWidth="2.500" />
        </Pic>
      </SmallTool>
      <SmallTool aria-label="Refresh">
        <Pic size={14}>
          <RefreshShape />
        </Pic>
      </SmallTool>
      <SmallTool aria-label="Filter Browser">
        <Pic size={14}>
          <Funnel />
        </Pic>
      </SmallTool>
      <SmallTool aria-label="Collapse All">
        <Pic size={14}>
          <TreeArrow />
        </Pic>
      </SmallTool>
      <SmallTool aria-label="Properties">
        <Pic size={14}>
          <Info />
        </Pic>
      </SmallTool>
    </DockTools>
    <ListBox>
      <TreeView>
        <Tree>
          {files.map((f) => (
            <TreeRow key={f.name} $depth={f.depth} $hover={f.kind === "rasterHot"}>
              {f.twisty && (
                <Twisty>
                  <Triangle dir={f.twisty} />
                </Twisty>
              )}
              {fileIcon[f.kind]}
              <span>{f.name}</span>
            </TreeRow>
          ))}
        </Tree>
      </TreeView>
      <Scroll $dir="column">
        <ScrollButton aria-label="Scroll up">
          <Triangle dir="up" />
        </ScrollButton>
        <Track $size={104} />
        <Thumb $size={54} />
        <Track $size={114} />
        <ScrollButton aria-label="Scroll down">
          <Triangle dir="down" />
        </ScrollButton>
      </Scroll>
      <Scroll $dir="row">
        <ScrollButton aria-label="Scroll left">
          <Triangle dir="left" />
        </ScrollButton>
        <Track $size={66} />
        <Thumb $size={126} />
        <Track $size={15} />
        <ScrollButton aria-label="Scroll right">
          <Triangle dir="right" />
        </ScrollButton>
      </Scroll>
    </ListBox>
  </Dock>
);

const layers: { name: string; symbol: React.ReactNode; legend?: [string, string]; current?: boolean }[] = [
  {
    name: "Roads_Tracks",
    current: true,
    symbol: (
      <svg width="17" height="4" viewBox="0 0 17 4">
        <path d="M0 2H17" stroke="#f08a24" strokeWidth="2" />
      </svg>
    ),
  },
  {
    name: "Ziama_Landscape",
    symbol: (
      <svg width="17" height="17" viewBox="0 0 17 17">
        <rect x=".5" y=".5" width="16" height="16" fill="#e85d78" stroke="#8a3446" />
      </svg>
    ),
  },
  { name: "Ziama_LandCover_2019", symbol: <Raster />, legend: ["0", "9"] },
  {
    name: "Biomonitoring_Ziama2019",
    symbol: (
      <svg width="17" height="10" viewBox="0 0 17 10">
        <circle cx="8.500" cy="5" r="4" fill="#ad4cc6" stroke="#5d2a6b" />
      </svg>
    ),
  },
  { name: "Ziama_DEM", symbol: <Raster />, legend: ["0", "1386"] },
];

const LayersDock = () => (
  <Dock $grow>
    <DockHeader title="Layers" />
    <DockTools>
      <SmallTool aria-label="Layer Styling">
        <Pic size={14}>
          <path d="M1 10L8 8L12 13L7 18C4 17 2 14 1 10Z" fill="#efb54a" />
          <path d="M7 8L12 13" stroke="#c8452e" strokeWidth="3" />
          <path d="M11 10L18 3" stroke="#b88647" strokeWidth="3.500" />
        </Pic>
      </SmallTool>
      <SmallTool aria-label="Add Group">
        <Pic size={14}>
          <path d="M2 18V10L8 7V18ZM8 18V3H12V18M12 18V6H17V12" fill="#d9d9d9" stroke="#888" />
          <path d="M16 12V20M12 16H20" stroke="#4d9a4d" strokeWidth="2.500" />
        </Pic>
      </SmallTool>
      <SmallTool aria-label="Manage Map Themes">
        <Pic size={14}>
          <path d="M0 9C5 2 13 2 18 9C13 15 5 15 0 9Z" fill="#c9d4df" stroke="#64748a" />
          <circle cx="9" cy="8.500" r="3.800" fill="#33567d" />
          <path d="M11 13H20L15.500 18Z" fill="#444" />
        </Pic>
      </SmallTool>
      <SmallTool aria-label="Filter Legend">
        <Pic size={14}>
          <Funnel />
        </Pic>
      </SmallTool>
      <SmallTool disabled aria-label="Filter Legend by Expression">
        <Pic size={14}>
          <path d="M9 2C4 0 2 5 6 7C1 8 2 14 8 12" stroke="#c6c6c6" strokeWidth="2" />
          <path d="M10 13H18M10 17H18" stroke="#d0d0d0" strokeWidth="2.500" strokeDasharray="3 2" />
        </Pic>
      </SmallTool>
      <SmallTool $narrow disabled aria-label="Expression options">
        <Triangle dir="down" color="#aaa" />
      </SmallTool>
      <SmallTool aria-label="Expand All">
        <Pic size={14}>
          <TreeArrow down />
        </Pic>
      </SmallTool>
      <SmallTool aria-label="Collapse All">
        <Pic size={14}>
          <TreeArrow />
        </Pic>
      </SmallTool>
      <SmallTool aria-label="Remove Layer">
        <Pic size={14}>
          <rect x="2" y="2" width="14" height="14" fill="#f8f8f8" stroke="#777" strokeWidth="1.400" />
          <rect x="11" y="14" width="9" height="4" fill="#d8434b" />
        </Pic>
      </SmallTool>
    </DockTools>
    <LayerBox>
      <LayerList>
        {layers.map((l) => (
          <React.Fragment key={l.name}>
            <LayerRow>
              <LayerTwisty>{l.legend && <Triangle dir="down" />}</LayerTwisty>
              <Check id={l.name} defaultChecked />
              {l.symbol}
              <LayerName htmlFor={l.name} $current={l.current}>
                {l.name}
              </LayerName>
            </LayerRow>
            {l.legend && (
              <>
                <LayerRow>
                  <span />
                  <span />
                  <svg width="17" height="16" viewBox="0 0 17 16">
                    <rect x="1" y="0" width="15" height="15" fill="#000" />
                  </svg>
                  <span>{l.legend[0]}</span>
                </LayerRow>
                <LayerRow>
                  <span />
                  <span />
                  <span />
                  <span>{l.legend[1]}</span>
                </LayerRow>
              </>
            )}
          </React.Fragment>
        ))}
      </LayerList>
    </LayerBox>
  </Dock>
);

/* ---------- Map ---------- */

/* Geometry is kept per map sheet; each sheet has its own origin in map units. */
type Sheet = "nw" | "ne" | "sw" | "se";
const origin: Record<Sheet, [number, number]> = { nw: [0, 0], ne: [1185, 0], sw: [0, 1035], se: [1185, 1035] };

const join = (parts: [Sheet, string][]) =>
  parts
    .flatMap(([sheet, pts]) =>
      pts.split(" ").map((p) => {
        const [x, y] = p.split(",").map(Number);
        return `${x + origin[sheet][0]},${y + origin[sheet][1]}`;
      })
    )
    .join(" ");

const landscape = join([
  ["ne", "20,165 90,150 92,125 125,122 165,140 178,165 180,200 160,235 158,270 135,290 150,300 190,278 235,262 275,245 285,262 285,300 262,330 230,355 245,370 262,375 258,440 250,500 235,535 228,580 205,600 192,612 205,630 190,645 165,665 157,690 150,675 125,672 100,680 72,670 70,652 50,655 40,685 20,708 45,722 75,735 80,780 95,800 120,800 125,820 110,855 125,870 120,905 140,920 140,955 170,965 195,970 215,960 215,940 245,930 250,905 275,885 300,872 340,865 330,850 345,828 352,855 372,890 385,915 420,930 440,955 460,985 462,1020 460,1035"],
  ["se", "455,5 443,50 440,80 415,80 388,100 390,125 422,142 425,170 445,190 465,192 500,180 512,200 518,165 555,150 585,160 605,185 608,175 630,185 645,225 660,260 685,275 717,303 700,318 672,330 680,375 700,450 725,515 742,570 762,570 760,545 745,535 745,500 760,472 785,465 797,430 815,420 800,400 815,385 850,388 885,372 875,355 850,330 880,315 912,295 910,265 900,255 910,238 945,225 960,220 975,235 1000,245 995,275 1025,310 1040,350 1065,390 1100,430 1127,470 1100,500 1080,530 1065,560 1045,580 1035,595 1010,592 975,575 945,565 920,542 895,555 880,590 850,605 805,635 780,670 750,660 710,670 695,685 705,700 723,722 705,745 675,765 655,780 660,820 650,850 640,860 615,850 590,840 582,812 550,830 540,845 495,865 492,890 500,905 490,925 465,940 400,950 365,967 365,950 397,918 365,915 350,890 330,885 300,895 250,885 235,850 205,842 180,860 120,888 100,882 92,880 95,850 115,815 105,790 95,775 85,787 55,785 35,810 15,825 5,827"],
  ["sw", "1175,815 1180,770 1165,745 1140,735 1130,700 1130,590 1100,590 1060,590 1035,580 1035,560 1000,570 970,560 972,540 955,522 930,522 893,562 900,590 890,615 865,640 840,655 830,662 805,665 805,695 770,720 750,732 720,765 700,785 685,785 670,765 640,740 632,710 637,685 630,660 630,640 655,625 640,610 605,605 605,570 603,485 580,472 515,462 505,445 470,432 465,408 410,415 405,390 398,378 415,350 425,330 450,315 480,320 510,310 530,328 555,325 600,305 605,290 630,288 648,272 640,240 620,225 605,235 608,180 612,145 640,135 670,90 680,40 710,20 735,0"],
  ["nw", "735,1020 722,1005 715,1010 700,985 702,965 718,958 690,940 678,925 660,915 620,912 585,925 555,950 550,1000 520,990 480,980 430,960 380,940 400,905 420,885 470,850 525,825 540,830 540,800 515,775 490,755 488,735 495,700 510,675 505,630 530,600 570,578 605,575 635,570 632,600 600,630 590,660 605,705 615,745 640,745 670,750 705,748 720,730 760,720 800,700 830,700 850,720 900,720 915,722 895,755 865,800 872,803 900,760 935,750 950,750 960,735 980,725 985,690 975,685 990,655 1020,640 1025,610 1010,570 980,562 960,580 945,605 920,615 905,595 885,575 865,595 840,595 855,580 860,570 875,545 870,515 905,495 935,470 940,420 930,400 970,385 990,400 1000,400 1015,375 1050,350 1070,325 1120,312 1112,235 1150,215"],
]);

const forest = join([
  ["nw", "380,850 540,790 560,860 380,940 400,965 550,1000 480,1035"],
  ["sw", "480,0 460,60 440,120 430,200 440,260 440,310 400,380 460,410 620,440 660,600 660,780 640,820 600,760 450,795 380,830 345,870 340,930 370,990 280,1020 150,1060 150,1010 90,980 100,930 150,900 90,830 90,760 15,750 15,650 60,645 110,620 160,580 150,530 100,480 60,440 15,430 15,160 100,150 110,80 200,60 270,20"],
  ["nw", "300,1030 330,1000 380,950 360,890"],
]);

const clearings = [
  join([["sw", "15,330 180,290 230,200 330,130 420,95 445,180 330,250 240,290 320,330 290,370 220,420 140,420 70,400 15,370"]]),
  join([["sw", "15,430 60,430 110,490 160,530 165,580 100,620 15,640"]]),
];

const savanna = [
  join([["ne", "560,15 1210,15 1210,330 1120,420 1000,300 900,480 780,440 690,340 560,400 430,440 380,400 480,260 400,180 520,120"]]),
  join([["se", "1090,0 1210,0 1210,560 1120,500 1130,420 1060,350 1040,250 1110,180"]]),
];
const slopes = [
  join([["ne", "400,430 560,350 900,470 900,1000 760,900 700,760 560,640 440,560"]]),
  join([["ne", "640,940 920,860 960,740 1080,720 1000,1000"], ["se", "1100,100 1000,260 900,200 860,60 640,60"]]),
];
const ridge = join([["ne", "-100,15 560,15 520,120 400,180 480,260 300,560 200,600 170,200 20,150 -70,160"]]);

const roads: Record<Sheet, string[]> = {
  nw: [
    "20,30 35,45 60,55 100,65 150,78", "125,28 145,60 150,90 165,125 185,140", "20,140 120,135 200,130 320,140 355,155",
    "365,28 400,45 450,75 435,110 380,140 355,155 340,190 325,225 290,270 255,295 245,310 200,315 170,340 130,370 110,400 75,415 35,410 20,380 40,345 45,310 80,270 135,240 130,190 140,155 185,140",
    "20,335 45,333", "310,115 325,135 355,155", "325,115 345,150 310,120", "450,75 490,52 560,50 605,30",
    "580,28 578,100 600,160 612,210 620,245 640,258 655,265 680,320 715,370 710,410 712,450 728,480 700,510 680,555 645,605",
    "640,258 590,270 570,300 562,340 525,385 490,400 472,430 400,435 350,475 305,530 300,560 270,620 255,700 220,740 215,780",
    "562,340 585,370", "390,348 430,370 472,430 430,475 415,510", "525,385 525,480 515,515 490,550 450,580 405,605", "450,580 460,640 485,700",
    "330,215 350,265 400,268 455,282 460,240 490,210", "400,268 425,220 445,205",
    "245,310 257,370 228,420 175,440 155,485 140,500 112,460 105,490 75,520 65,550 40,570 20,573", "228,420 240,470", "92,340 118,375 110,395",
    "20,635 85,622", "20,725 55,715 110,745 170,765 205,785 250,783 310,800", "205,785 170,820 165,855 115,890 90,900 50,930 20,940", "165,855 185,857", "40,825 75,835 90,870 90,900",
    "115,890 150,895 185,910 215,975 250,950 300,948", "215,975 185,1020 150,1050", "228,980 300,983", "235,980 280,1035",
    "715,370 740,380 800,400 850,355 880,310 920,265 965,250 990,230 1005,160 1040,140 1130,135 1200,100", "1045,88 1040,140", "982,145 982,165", "1150,125 1200,125",
    "800,400 825,415 835,470 850,520 832,595 775,630 745,655 720,690 710,735 705,800 680,850 683,905 650,960 645,985 620,1010 618,1045",
    "832,595 860,608 905,600 960,625 1005,645 1040,650 1080,625 1125,592 1145,587 1155,608 1170,600 1185,612 1200,615", "745,655 800,692",
    "735,28 800,42 850,58 940,55 965,28", "740,30 748,75 725,110 745,155 770,160 800,205", "815,42 818,80 808,140 840,155 925,160 920,100 940,55", "925,160 940,182 1005,160",
    "478,1005 520,1020 570,1030 618,1045", "500,1040 512,1018",
  ],
  ne: [
    "35,25 25,70 5,120 45,130 60,90", "80,510 45,545 30,585 0,615 20,645 45,665 75,690 120,705 155,685 230,632 265,630 330,612 370,622 460,598 495,565 560,540 640,505",
    "262,590 263,630", "125,705 170,755 200,770 265,772 310,800 340,850 370,885", "205,770 230,800 255,820", "370,885 345,925",
    "370,885 430,850 490,800 535,720 545,710", "460,598 495,650 545,710 620,765 670,775 715,768 735,775 732,840", "540,720 542,850", "545,710 600,760 625,830", "715,768 690,800 688,845", "670,775 670,795",
    "370,885 385,912 430,940 475,985 520,1045", "640,505 650,460 690,425 735,390 755,380 760,355 795,340 820,290 895,265 925,225 945,200 940,130 960,25",
    "640,505 660,510 685,480", "800,25 840,95 848,195 880,205 945,200", "985,25 970,90 950,150 945,200", "935,140 955,100 965,90 945,170 935,140 950,90", "990,40 1020,45 1045,80", "895,265 915,310",
    "555,405 565,415 690,420", "575,472 640,465 690,430", "795,340 797,390 825,440 832,495",
    "690,425 740,450 790,490 832,495 905,572 960,562 1020,570 1080,590 1130,655 1165,665 1200,665", "1165,665 1165,650",
    "690,425 685,500 665,560 675,610 655,690 715,768", "700,425 715,450 750,545 785,600 795,660 825,720 860,790 862,835 820,838", "825,720 790,735 755,745",
    "960,562 975,485 1020,425 960,438", "1020,425 1095,450 1135,405", "1020,570 1060,530 1115,520 1155,485",
    "1130,660 1080,680 1000,695", "1130,660 1090,715 1085,770 1092,830 1085,960 1095,965 1200,970", "1095,715 1120,745 1165,768", "1095,965 1110,985 1155,1010 1165,1045", "1095,965 1060,970 1045,1020 1030,1050",
    "1120,25 1170,90 1175,140 1150,210 1152,265", "1080,283 1150,265 1200,272", "1125,40 1200,35", "1125,45 1165,60 1200,75",
    "615,38 645,65 640,105 600,135 595,155 540,165 465,190 420,235", "595,155 640,160 662,185 650,220 680,230", "565,143 595,155", "600,1050 615,1010 680,990", "1190,800 1180,840",
  ],
  sw: [
    "20,85 50,60 100,45 180,0", "20,370 50,355 90,370 205,340 192,310 240,260 350,190", "192,315 212,335",
    "618,0 615,70 608,125 610,170 585,230 582,275", "455,40 500,30 530,40 510,80", "530,40 545,12 600,0", "445,150 510,98 530,105 545,135 565,115 608,125", "560,105 575,118", "450,175 472,200 500,220 585,235", "472,200 445,225",
    "20,605 35,560 50,540", "20,890 45,860", "500,1050 530,1000",
    "950,640 960,680 1010,710 1045,750 1080,790 1110,850 1150,895 1200,925", "960,680 940,735 880,750 862,775 835,760", "862,775 900,820 915,865 950,910 975,955 1010,970 1005,1000",
    "955,655 1000,675 1060,675 1110,685 1200,690", "1010,710 1050,690 1080,655 1125,655", "1080,655 1080,615 1100,602",
    "760,912 790,920 830,960 880,975 925,1015", "760,1048 830,1025 925,1015 1005,1000 1100,975 1125,958 1180,972 1200,960", "990,1010 1020,1050", "945,1015 955,1050", "1200,840 1190,900 1200,925", "990,1010 975,1050",
  ],
  se: [
    "515,0 560,45 600,100 635,190 665,290 672,345 700,460 745,585 770,620 790,660 820,710 850,795", "575,40 600,20 610,0",
    "555,55 535,70 530,130 505,200 490,220 440,280 405,350 375,390 375,430 360,445 310,470 275,515 235,540 200,585 160,610 110,685 40,755 20,800 18,850 5,890 20,945 20,1000 35,1050",
    "0,690 60,682 110,685", "575,38 660,50 730,70 785,102 865,88 890,65 985,60 1020,65 1065,110 1080,150 1115,205 1100,245 1060,255 985,250", "985,60 1045,0",
    "865,88 870,130 900,165 945,190 985,250 1030,330 1040,370 1080,440 1110,465 1118,500 1110,540 1130,610 1135,635", "900,325 950,318 1000,322 1030,335",
    "1135,635 1145,560 1200,505", "1135,635 1200,655", "1135,635 1060,685 970,710 900,770 850,795 790,840 740,855 680,890 630,892 610,860",
    "850,795 900,852 960,860 965,895 960,950 910,975 860,985 800,1015 780,1050", "965,895 1035,920 1020,960 1040,1005 1110,995 1150,975 1200,965", "850,935 860,985",
    "20,945 90,928 150,945 245,968 365,972 450,952 540,925 605,945 630,892", "245,968 265,1000 260,1050", "605,945 555,980 500,1010 470,1050", "600,950 615,975",
    "1110,995 1090,1010 1078,1045", "1150,985 1195,1040", "1155,0 1165,15 1200,35", "635,180 680,168",
  ],
};

const streams: Record<Sheet, string[]> = {
  nw: [
    "220,120 300,122 340,150 300,190 290,240 250,300", "360,160 430,172 560,172", "470,30 445,90 470,140", "870,80 865,130 845,225 780,275 700,310 640,335 630,370 650,400 600,460 575,500 572,550",
    "1200,100 1150,130 1105,180 1060,230 1050,290 1010,345 935,410 880,460 850,500 800,560 740,630 720,670 670,712 610,712", "1020,600 1015,640 970,680 920,740 870,800", "20,825 60,860 90,910 30,980", "90,910 180,930 210,960 370,940", "720,30 720,120 640,150",
    "630,190 650,250", "620,1030 700,1010",
  ],
  ne: [
    "230,355 290,300 370,265 480,200 620,160 690,130 750,110 830,100", "1090,50 1060,120 990,180 920,230 900,330", "920,385 865,410 870,480 890,560 865,640 880,710 910,730 915,850 910,960 905,1050",
    "370,890 440,905 540,910 640,940 690,950 750,900", "640,820 680,870 750,900 830,905 910,915", "100,750 200,810 240,860 280,870 340,862", "360,520 360,620 330,700 270,760 280,830 310,860",
    "710,470 800,540 880,570", "1020,570 1110,575 1190,550", "690,950 620,970 570,1050", "930,850 1040,800 1080,760",
  ],
  sw: [
    "435,230 445,305", "400,420 400,490 460,525", "90,490 160,520 235,555 210,590 225,650 300,655 305,690", "20,545 90,465 180,385 230,290 330,230 400,200 440,130 520,75 620,15", "190,100 240,150 230,190 260,215",
    "660,750 685,810 640,890 645,940", "570,1050 650,940 750,860 830,790 940,650", "20,845 90,870 150,910", "965,600 1000,570 1030,560", "1010,590 1060,575 1120,580", "320,1000 370,995", "60,400 75,440 110,510",
    "500,740 530,725", "155,500 165,490", "300,545 280,550", "210,865 235,850",
  ],
  se: [
    "425,140 470,130 500,90 580,0", "910,0 865,90 945,190", "705,240 710,290 755,350 765,395 815,415", "975,590 940,650 1010,670", "1000,700 985,780 960,860 1040,835 1120,830 1200,790", "590,975 590,1045",
    "510,935 560,960", "1170,660 1185,750", "860,1000 960,960",
  ],
};

const towns: Record<Sheet, string[]> = {
  nw: [
    "495,24 483,50 497,85 520,80 548,92 546,130 560,145 592,150 585,180 612,192 632,160 605,145 592,90 600,50 636,34 636,24",
    "945,238 985,240 980,255 965,258 950,248", "720,465 738,470 742,488 728,490", "176,138 188,138 188,148 176,148", "465,428 480,428 480,440 465,440", "705,362 720,365 720,380 708,378",
    "845,515 858,515 858,530 845,530", "1036,82 1050,82 1050,90 1036,90", "295,795 318,795 318,805 295,805", "82,895 96,895 96,906 82,906", "206,970 222,972 220,992 210,995", "105,380 118,385 115,398 106,395", "245,290 268,285 265,295 250,298", "25,565 36,565 36,575 25,575", "80,618 90,618 90,626 80,626", "136,492 146,492 146,502 136,502", "50,58 60,58 60,68 50,68", "615,1020 624,1020 622,1045 612,1045", "795,200 804,200 804,208 795,208",
  ],
  ne: [
    "45,672 60,665 75,685 155,685 158,705 150,718 192,758 175,760 140,735 128,718 55,720 48,705 55,695", "665,400 685,405 710,405 718,425 705,445 695,430 670,430", "655,490 680,495 675,508 658,505", "540,705 562,710 560,720 545,720",
    "930,205 945,198 955,205 930,218", "285,270 300,268 298,285 288,288", "1085,955 1108,958 1105,972 1088,970", "508,28 520,28 518,38 508,38", "812,834 825,834 825,842 812,842", "470,980 482,985 478,992 470,990", "895,568 910,570 905,578 895,578", "355,880 380,885 375,895 360,895",
  ],
  sw: [
    "578,272 588,272 588,284 578,284", "822,742 835,742 835,768 828,768", "936,625 946,628 944,650 936,648", "512,980 522,985 530,1010 522,1012 512,1000", "640,920 648,920 648,945 642,945", "915,1015 935,1018 930,1028 918,1026", "985,1005 1005,1005 1015,1030 1022,1048 1005,1035 992,1020",
    "200,338 215,340 214,350 204,348", "755,908 775,910 770,918 758,916", "505,72 515,72 512,92 505,90", "345,187 356,187 356,195 345,195",
  ],
  se: [
    "535,55 552,38 578,38 580,65 545,78 536,70", "635,178 650,180 648,200 638,205 633,190", "848,82 880,85 878,98 855,96", "845,775 862,790 875,810 882,835 862,825 848,805", "1122,600 1140,605 1142,635 1125,630", "20,938 38,945 30,962 18,960", "232,965 258,968 258,990 250,995 245,978", "600,928 622,918 620,945 602,945",
    "1115,965 1150,962 1170,970 1168,1000 1150,1005 1180,1025 1198,1045 1175,1030 1140,1000 1105,1010 1100,1028 1085,1025 1088,1000 1118,990", "960,895 980,895 978,905 962,905", "545,970 562,978 555,990 545,985", "1025,330 1038,335 1038,348 1028,348", "942,192 955,192 955,200 942,200", "1015,950 1030,955 1025,965 1015,962", "505,0 522,0 530,20",
  ],
};

const sheets = Object.keys(origin) as Sheet[];

const Terrain = ({ id, freq, seed, tones, rough = 60, gain = 3 }: { id: string; freq: string; seed: number; tones: string; rough?: number; gain?: number }) => {
  const row = `${gain} 0 0 0 ${(1 - gain) / 2}`;
  return (
    <filter id={id} x="0" y="0" width="1" height="1" colorInterpolationFilters="sRGB">
      <feTurbulence type="fractalNoise" baseFrequency={freq} numOctaves={5} seed={seed} result="noise" />
      <feColorMatrix in="noise" values={`${row} ${row} ${row} 0 0 0 0 1`} />
      <feComponentTransfer result="land">
        <feFuncR type="discrete" tableValues={tones} />
        <feFuncG type="discrete" tableValues={tones} />
        <feFuncB type="discrete" tableValues={tones} />
      </feComponentTransfer>
      <feTurbulence type="fractalNoise" baseFrequency="0.02" numOctaves={5} seed={seed + 1} result="wobble" />
      <feDisplacementMap in="SourceGraphic" in2="wobble" scale={rough} xChannelSelector="R" yChannelSelector="G" result="edge" />
      <feComposite in="land" in2="edge" operator="in" />
    </filter>
  );
};

const Patches = ({ id, freq, seed, tone, gain, bias }: { id: string; freq: string; seed: number; tone: number; gain: number; bias: number }) => (
  <filter id={id} x="0" y="0" width="1" height="1" colorInterpolationFilters="sRGB">
    <feTurbulence type="fractalNoise" baseFrequency={freq} numOctaves={6} seed={seed} />
    <feColorMatrix values={`0 0 0 0 ${tone} 0 0 0 0 ${tone} 0 0 0 0 ${tone} ${gain} 0 0 0 ${bias}`} />
  </filter>
);

const MapView = () => (
  <MapSvg width="789" height="689" viewBox="15 21 2367 2067" role="img" aria-label="Ziama landscape map">
    <defs>
      <Terrain id="scrub" freq="0.09 0.12" seed={4} tones="0.12 0.16 0.24 0.33 0.39 0.41 0.43 0.46" rough={0} gain={2.4} />
      <Terrain id="ridges" freq="0.03 0.06" seed={9} tones="0.1 0.11 0.13 0.18 0.3 0.38 0.42 0.44" rough={90} />
      <Terrain id="bright" freq="0.04" seed={2} tones="0.2 0.34 0.42 0.46 0.5 0.6 0.66 0.64" rough={180} />
      <Terrain id="slope" freq="0.05" seed={15} tones="0.13 0.24 0.36 0.42 0.44 0.46 0.5 0.6" rough={240} />
      <Terrain id="dense" freq="0.03 0.06" seed={7} tones="0.11 0.11 0.11 0.11 0.11 0.11 0.11 0.22" rough={70} gain={2} />
      <Terrain id="patchy" freq="0.06" seed={12} tones="0.11 0.14 0.26 0.35 0.38 0.4 0.43 0.5" rough={110} />
      <Patches id="clouds" freq="0.015 0.025" seed={21} tone={0.11} gain={7} bias={-3.9} />
      <Patches id="haze" freq="0.015 0.02" seed={5} tone={0.42} gain={7} bias={-3.6} />
      <filter id="jagged" x="-5%" y="-5%" width="110%" height="110%" colorInterpolationFilters="sRGB">
        <feTurbulence type="fractalNoise" baseFrequency="0.04" numOctaves={2} seed={3} />
        <feDisplacementMap in="SourceGraphic" scale={12} xChannelSelector="R" yChannelSelector="G" />
      </filter>
      <clipPath id="frame">
        <rect x="15" y="21" width="2367" height="2067" />
      </clipPath>
    </defs>
    <g clipPath="url(#frame)">
      <rect x="15" y="21" width="2367" height="2067" fill="#444" filter="url(#scrub)" />
      <rect x="15" y="21" width="2367" height="2067" filter="url(#haze)" opacity=".5" />
      <polygon points={ridge} filter="url(#ridges)" />
      {slopes.map((s) => (
        <polygon key={s} points={s} filter="url(#slope)" />
      ))}
      {savanna.map((s) => (
        <polygon key={s} points={s} filter="url(#bright)" />
      ))}
      <rect x="15" y="21" width="2367" height="2067" filter="url(#clouds)" opacity=".5" />
      <polygon points={forest} filter="url(#dense)" />
      {clearings.map((c) => (
        <polygon key={c} points={c} filter="url(#patchy)" />
      ))}
      <g fill="none" stroke="#f2f2f2" strokeWidth="3" strokeDasharray="10 4 5 5" filter="url(#jagged)">
        {sheets.map((s) => (
          <g key={s} transform={`translate(${origin[s].join(" ")})`}>
            {streams[s].map((p) => (
              <polyline key={p} points={p} />
            ))}
          </g>
        ))}
      </g>
      <polygon points={landscape} fill="#e85d78" stroke="#2b2024" strokeWidth="4" strokeLinejoin="round" filter="url(#jagged)" />
      <g fill="#fff" filter="url(#jagged)">
        {sheets.map((s) => (
          <g key={s} transform={`translate(${origin[s].join(" ")})`}>
            {towns[s].map((p) => (
              <polygon key={p} points={p} />
            ))}
          </g>
        ))}
      </g>
      <g fill="none" stroke="#f09a24" strokeWidth="5" strokeLinejoin="round" strokeLinecap="round" filter="url(#jagged)">
        {sheets.map((s) => (
          <g key={s} transform={`translate(${origin[s].join(" ")})`}>
            {roads[s].map((p) => (
              <polyline key={p} points={p} />
            ))}
          </g>
        ))}
      </g>
    </g>
    <rect x="16.500" y="22.500" width="2364" height="2064" fill="none" stroke="#111" strokeWidth="3" />
  </MapSvg>
);

/* ---------- Status bar ---------- */

const Stepper = ({ name }: { name: string }) => (
  <Steps>
    <button aria-label={`Increase ${name}`}>
      <Triangle dir="up" size={7} />
    </button>
    <button aria-label={`Decrease ${name}`}>
      <Triangle dir="down" size={7} />
    </button>
  </Steps>
);

const Status = () => (
  <StatusBar>
    <Locator>
      <svg width="12" height="12" viewBox="0 0 12 12" fill="none" stroke="#777" aria-hidden="true">
        <circle cx="5" cy="5" r="4" />
        <path d="M8 8L11.500 11.500" />
      </svg>
      <input placeholder="Type to locate (Ctrl+K)" aria-label="Locate" />
    </Locator>
    <Field $gap={0}>
      <label htmlFor="coord">Coordinate</label>
      <Box $width={89}>
        <input id="coord" defaultValue="-9.5305,8.4314" />
      </Box>
      <StatusButton aria-label="Toggle extents">
        <Pic size={17}>
          <path d="M3 3C7 0 9 4 7 7L13 3L18 2M3 4L8 12M6 2L11 10M2 9L10 11" stroke="#111" strokeWidth="1.800" />
          <ellipse cx="11" cy="13" rx="6" ry="5.500" fill="#eee" stroke="#111" strokeWidth="2" />
          <path d="M7 13L15 11M11 8L12 18M16 8L19 10" stroke="#111" strokeWidth="1.500" />
        </Pic>
      </StatusButton>
    </Field>
    <Field $gap={12}>
      <label htmlFor="scale">Scale</label>
      <Box $width={80}>
        <select id="scale" defaultValue="1:317883">
          <option>1:317883</option>
          <option>1:500000</option>
        </select>
        <DropMark>
          <Triangle dir="down" />
        </DropMark>
      </Box>
    </Field>
    <Field $gap={12}>
      <StatusButton aria-label="Lock scale">
        <svg width="13" height="17" viewBox="0 0 13 17" fill="none">
          <path d="M3 8V5C3 0 10 0 10 5V8" stroke="#8a8a8a" strokeWidth="1.800" />
          <rect x="0" y="7.500" width="13" height="9" rx="1" fill="#666" />
        </svg>
      </StatusButton>
    </Field>
    <Field $gap={8}>
      <label htmlFor="magnifier">Magnifier</label>
      <Box $width={81}>
        <input id="magnifier" defaultValue="100%" />
        <Stepper name="magnifier" />
      </Box>
    </Field>
    <Field $gap={8}>
      <label htmlFor="rotation">Rotation</label>
      <Box $width={77}>
        <input id="rotation" defaultValue="0.0 °" />
        <Stepper name="rotation" />
      </Box>
    </Field>
    <Field $gap={6}>
      <Check id="render" defaultChecked />
      <label htmlFor="render">Render</label>
    </Field>
    <Field $gap={15}>
      <StatusButton>
        <Pic size={17}>
          <path d="M1 10C3 0 17 0 19 10C17 13 3 13 1 10Z" fill="#9a9a9a" stroke="#666" />
          <path d="M10 2V18M5 4C3 9 4 14 10 18C16 14 17 9 15 4M1 7H19M3 12L10 18L17 12" stroke="#555" strokeWidth="1.200" />
        </Pic>
        EPSG:4326
      </StatusButton>
    </Field>
    <Field $gap={17}>
      <StatusButton aria-label="Messages">
        <svg width="18" height="16" viewBox="0 0 18 16">
          <path d="M9 0C14 0 18 3 18 7C18 9 17 11 15.500 12L16.500 16L12 13.500C5 15 0 11.500 0 7C0 3 4 0 9 0Z" fill="#555" />
          <path d="M4 7H6M8 7H10M12 7H14" stroke="#fff" strokeWidth="2" />
        </svg>
      </StatusButton>
    </Field>
  </StatusBar>
);

/* The letter after "_" is the menu's access key. */
const menus = ["Pro_ject", "_Edit", "_View", "_Layer", "_Settings", "_Plugins", "Vect_or", "_Raster", "_Database", "_Web", "_Mesh", "Pro_cessing", "_Help"];

export default function App() {
  return (
    <Window>
      <GlobalStyle />
      <TitleBar>
        <QLogo />
        <Title>*Untitled Project — QGIS</Title>
        <WindowButtons>
          <WindowButton aria-label="Minimize">
            <svg width="11" height="11" viewBox="0 0 11 11">
              <path d="M0 5.500H11" stroke="#888" />
            </svg>
          </WindowButton>
          <WindowButton aria-label="Restore">
            <svg width="11" height="11" viewBox="0 0 11 11" fill="none" stroke="#777">
              <path d="M.5 2.500H8.500V10.500H.5ZM2.500 2.500V.5H10.500V8.500H8.500" />
            </svg>
          </WindowButton>
          <WindowButton aria-label="Close">
            <svg width="11" height="11" viewBox="0 0 11 11" stroke="#777">
              <path d="M.5 .5L10.500 10.500M10.500 .5L.5 10.500" />
            </svg>
          </WindowButton>
        </WindowButtons>
      </TitleBar>
      <MenuBar>
        {menus.map((m) => {
          const [before, after] = m.split("_");
          return (
            <MenuItem key={m}>
              {before}
              <u>{after[0]}</u>
              {after.slice(1)}
            </MenuItem>
          );
        })}
      </MenuBar>
      {toolRows.map((row, i) => (
        <Toolbar key={i} items={row} />
      ))}
      <Body>
        <Docks>
          <BrowserDock />
          <Splitter />
          <LayersDock />
        </Docks>
        <VSplit />
        <Canvas>
          <MapView />
        </Canvas>
      </Body>
      <Status />
      <Taskbar>
        <span />
        <i />
      </Taskbar>
    </Window>
  );
}
